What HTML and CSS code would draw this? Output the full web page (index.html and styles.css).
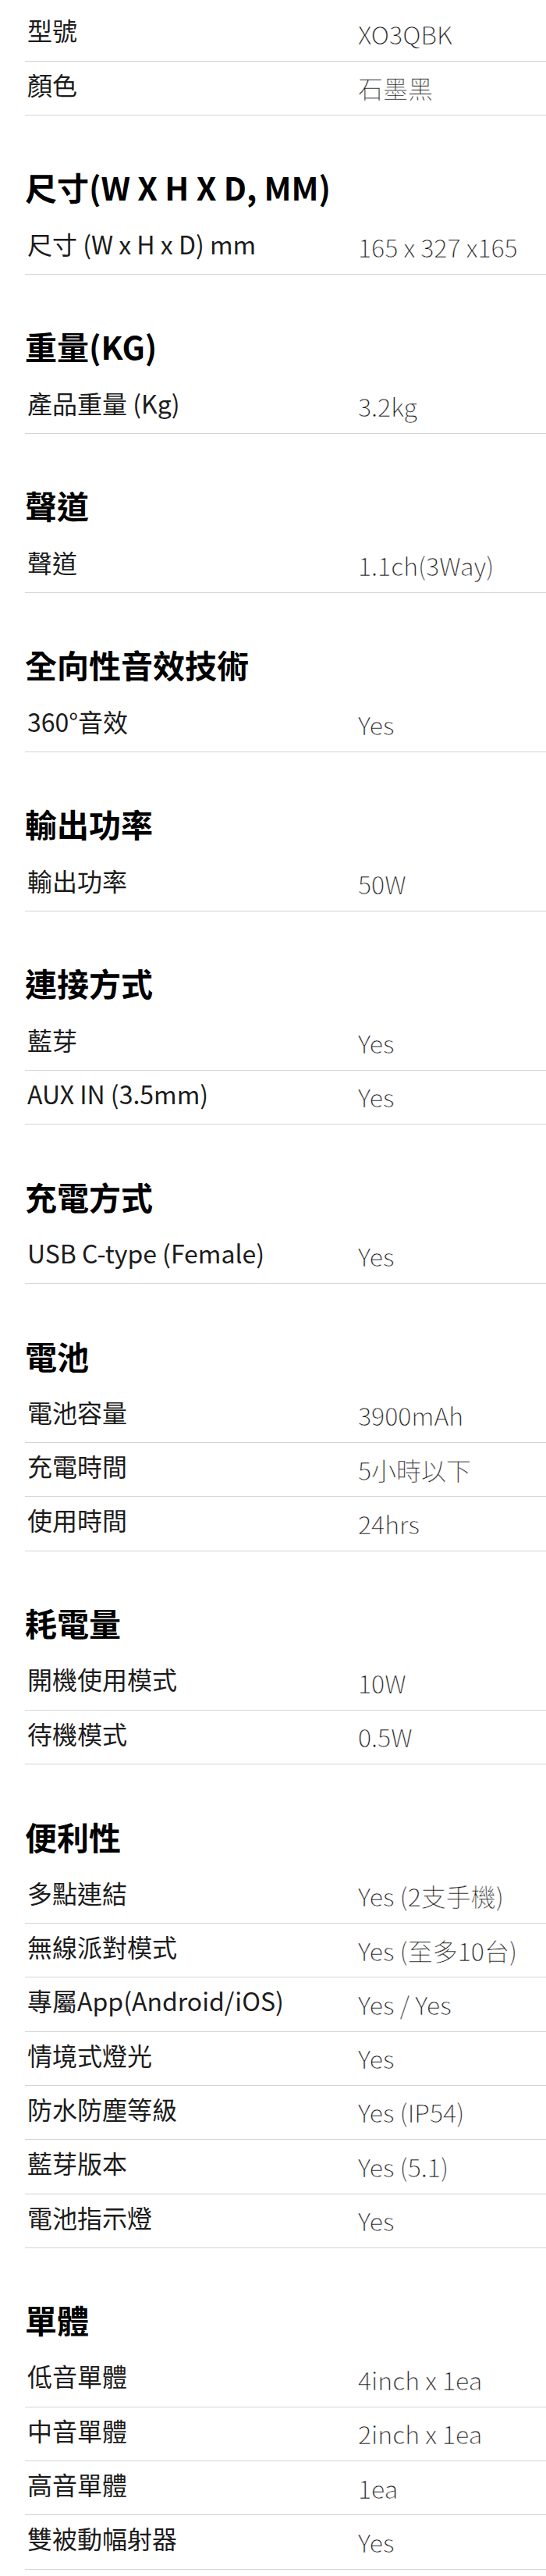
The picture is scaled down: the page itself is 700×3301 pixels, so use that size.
FILE: index.html
```html
<!DOCTYPE html>
<html lang="zh-Hant">
<head>
<meta charset="utf-8">
<title>規格</title>
<link rel="stylesheet" href="styles.css">
</head>
<body>
<main class="specs">
  <section class="group">
    <div class="row"><div class="label">型號</div><div class="value">XO3QBK</div></div>
    <div class="row"><div class="label">顏色</div><div class="value">石墨黑</div></div>
  </section>
  <section class="group">
    <h2 class="title">尺寸(W X H X D, MM)</h2>
    <div class="row"><div class="label">尺寸 (W x H x D) mm</div><div class="value">165 x 327 x165</div></div>
  </section>
  <section class="group">
    <h2 class="title">重量(KG)</h2>
    <div class="row"><div class="label">產品重量 (Kg)</div><div class="value">3.2kg</div></div>
  </section>
  <section class="group">
    <h2 class="title">聲道</h2>
    <div class="row"><div class="label">聲道</div><div class="value">1.1ch(3Way)</div></div>
  </section>
  <section class="group">
    <h2 class="title">全向性音效技術</h2>
    <div class="row"><div class="label">360°音效</div><div class="value">Yes</div></div>
  </section>
  <section class="group">
    <h2 class="title">輸出功率</h2>
    <div class="row"><div class="label">輸出功率</div><div class="value">50W</div></div>
  </section>
  <section class="group">
    <h2 class="title">連接方式</h2>
    <div class="row"><div class="label">藍芽</div><div class="value">Yes</div></div>
    <div class="row"><div class="label">AUX IN (3.5mm)</div><div class="value">Yes</div></div>
  </section>
  <section class="group">
    <h2 class="title">充電方式</h2>
    <div class="row"><div class="label">USB C-type (Female)</div><div class="value">Yes</div></div>
  </section>
  <section class="group">
    <h2 class="title">電池</h2>
    <div class="row"><div class="label">電池容量</div><div class="value">3900mAh</div></div>
    <div class="row"><div class="label">充電時間</div><div class="value">5小時以下</div></div>
    <div class="row"><div class="label">使用時間</div><div class="value">24hrs</div></div>
  </section>
  <section class="group">
    <h2 class="title">耗電量</h2>
    <div class="row"><div class="label">開機使用模式</div><div class="value">10W</div></div>
    <div class="row"><div class="label">待機模式</div><div class="value">0.5W</div></div>
  </section>
  <section class="group">
    <h2 class="title">便利性</h2>
    <div class="row"><div class="label">多點連結</div><div class="value">Yes (2支手機)</div></div>
    <div class="row"><div class="label">無線派對模式</div><div class="value">Yes (至多10台)</div></div>
    <div class="row"><div class="label">專屬App(Android/iOS)</div><div class="value">Yes / Yes</div></div>
    <div class="row"><div class="label">情境式燈光</div><div class="value">Yes</div></div>
    <div class="row"><div class="label">防水防塵等級</div><div class="value">Yes (IP54)</div></div>
    <div class="row"><div class="label">藍芽版本</div><div class="value">Yes (5.1)</div></div>
    <div class="row"><div class="label">電池指示燈</div><div class="value">Yes</div></div>
  </section>
  <section class="group">
    <h2 class="title">單體</h2>
    <div class="row"><div class="label">低音單體</div><div class="value">4inch x 1ea</div></div>
    <div class="row"><div class="label">中音單體</div><div class="value">2inch x 1ea</div></div>
    <div class="row"><div class="label">高音單體</div><div class="value">1ea</div></div>
    <div class="row"><div class="label">雙被動幅射器</div><div class="value">Yes</div></div>
  </section>
</main>
</body>
</html>
```

FILE: styles.css
```css
html, body {
  margin: 0;
  padding: 0;
  background: #ffffff;
}

body {
  font-family: "Noto Sans CJK TC", "Noto Sans CJK SC", "Noto Sans", sans-serif;
  color: #1f1f1f;
}

.specs {
  padding: 9.4px 0 4px 32px;
  display: flex;
  flex-direction: column;
}

.group {
  display: flex;
  flex-direction: column;
}

.title {
  margin: 62.5px 0 13.2px 0;
  font-size: 41px;
  line-height: 59px;
  font-weight: 700;
  color: #000000;
  letter-spacing: 0;
}

.row {
  display: grid;
  grid-template-columns: 427px 1fr;
  align-items: start;
  height: 69.3px;
  box-sizing: border-box;
  border-bottom: 1px solid #d4d4d4;
}

.label {
  padding: 6px 0 0 3px;
  font-size: 32px;
  line-height: 46px;
  font-weight: 400;
  color: #1c1c1c;
  white-space: nowrap;
}

.value {
  padding-top: 10.5px;
  font-size: 32px;
  line-height: 46px;
  font-weight: 300;
  color: #141414;
  -webkit-text-stroke: 0.45px #ffffff;
  white-space: nowrap;
}
```
